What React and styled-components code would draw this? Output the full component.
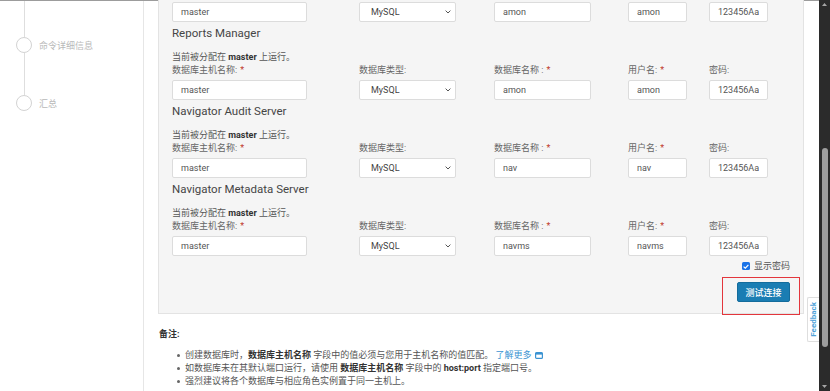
import React from 'react';
import styled, { createGlobalStyle } from 'styled-components';

const FONT = `Roboto, "Noto Sans CJK SC", "Liberation Sans", sans-serif`;

const GlobalStyle = createGlobalStyle`
  html, body { margin: 0; padding: 0; background: #fff; }
  body { font-family: ${FONT}; width: 830px; height: 391px; overflow: hidden; }
  * { box-sizing: border-box; }
`;

const Page = styled.div`
  position: relative;
  display: flex;
  width: 830px;
  height: 391px;
  overflow: hidden;
  background: #fff;
`;

const Main = styled.div`
  flex: 1;
  min-width: 0;
  display: flex;
  border-top: 1px solid #9c9c9c;
`;

const Sidebar = styled.aside`
  width: 144px;
  flex: none;
  border-right: 1px solid #e6e6e6;
  overflow: hidden;
  padding-top: 15px;
`;

const Step = styled.div`
  position: relative;
  height: 58px;
  display: flex;
  align-items: center;
  gap: 7px;
  padding-left: 16px;
  font-size: 9px;
  color: #b9b9b9;
  &::before {
    content: "";
    position: absolute;
    left: 23.5px;
    top: -21px;
    width: 1px;
    height: 42px;
    background: #dedede;
  }
`;

const Dot = styled.span`
  position: relative;
  width: 16px;
  height: 16px;
  flex: none;
  border-radius: 50%;
  border: 1.5px solid #d3d3d3;
  background: #fff;
`;

const Content = styled.main`
  flex: 1;
  min-width: 0;
  padding: 0 15px 0 14px;
`;

const Panel = styled.section`
  margin-top: -9px;
  background: #f5f5f5;
  border: 1px solid #e3e3e3;
  padding: 9px 13px 11px;
`;

const Heading = styled.h3`
  margin: 4px 0 11px;
  font-size: 11.5px;
  line-height: 14px;
  font-weight: 400;
  color: #454545;
`;

const Assigned = styled.div`
  font-size: 9px;
  line-height: 13px;
  color: #555;
  b { color: #333; font-weight: 700; }
`;

const FieldRow = styled.div`
  display: grid;
  grid-template-columns: 187px 135px 134px 81px auto;
`;

const Field = styled.div`
  display: flex;
  flex-direction: column;
  width: ${(p) => p.$w}px;
`;

const Label = styled.label`
  font-size: 9px;
  line-height: 13px;
  color: #666;
  margin-bottom: 3px;
  white-space: nowrap;
`;

const Req = styled.span`
  color: #c0392b;
  margin-left: 3px;
`;

const TextInput = styled.input`
  width: 100%;
  height: 20px;
  border: 1px solid #dcdcdc;
  border-radius: 2px;
  background: #fff;
  padding: 0 8px;
  font: 9px ${FONT};
  color: #555;
  outline: none;
`;

const SelectBox = styled.div`
  height: 20px;
  display: flex;
  align-items: center;
  justify-content: space-between;
  padding: 0 4px 0 11px;
  border: 1px solid #dcdcdc;
  border-radius: 2px;
  background: #fff;
  font-size: 9px;
  color: #444;
`;

const Options = styled.div`
  display: flex;
  flex-direction: column;
  align-items: flex-end;
  margin-top: 4px;
`;

const CheckRow = styled.label`
  display: flex;
  align-items: center;
  gap: 4px;
  font-size: 9px;
  line-height: 12px;
  color: #555;
`;

const CheckBox = styled.span`
  width: 8px;
  height: 8px;
  border-radius: 1.5px;
  background: #1a73e8;
  display: inline-flex;
  align-items: center;
  justify-content: center;
`;

const TestButton = styled.button`
  margin-top: 10px;
  width: 53px;
  height: 20px;
  padding: 0;
  background: #1a7db3;
  border: 1px solid #146c9c;
  border-radius: 2px;
  color: #fff;
  font: 500 9px ${FONT};
`;

const Notes = styled.div`
  padding: 14px 0 0 1px;
`;

const NotesTitle = styled.div`
  font-size: 9px;
  line-height: 13px;
  font-weight: 700;
  color: #333;
`;

const NoteList = styled.ul`
  list-style: none;
  margin: 8px 0 0;
  padding: 0;
`;

const NoteItem = styled.li`
  padding-left: 18px;
  font-size: 9px;
  line-height: 13px;
  color: #555;
  white-space: nowrap;
  b { color: #333; font-weight: 700; }
  &::before {
    content: "";
    display: inline-block;
    width: 3px;
    height: 3px;
    border-radius: 50%;
    background: #666;
    vertical-align: middle;
    margin-right: 5px;
  }
`;

const Link = styled.a`
  color: #3a93d2;
  text-decoration: none;
  svg { vertical-align: -1px; margin-left: 3px; }
`;

const Scrollbar = styled.div`
  width: 11px;
  flex: none;
  background: #2b2b2b;
  display: flex;
  flex-direction: column;
  align-items: center;
  padding: 3px 0;
`;

const Track = styled.div`
  flex: 1;
  width: 100%;
  display: flex;
  justify-content: center;
`;

const Thumb = styled.div`
  width: 6px;
  border-radius: 3px;
  background: #9e9e9e;
`;

const Feedback = styled.div`
  position: absolute;
  right: 11px;
  top: 297px;
  width: 12px;
  height: 45px;
  background: #fff;
  border: 1px solid #dedede;
  border-right: none;
  border-radius: 2px 0 0 2px;
  display: flex;
  align-items: center;
  justify-content: center;
  span {
    writing-mode: vertical-rl;
    transform: rotate(180deg);
    font: 700 8px ${FONT};
    color: #4ea2d8;
  }
`;

const Highlight = styled.div`
  position: absolute;
  left: 722px;
  top: 277px;
  width: 78px;
  height: 38px;
  border: 1.5px solid #e3363c;
`;

const Chevron = () => (
  <svg width="6" height="4" viewBox="0 0 6 4">
    <path d="M0.6 0.6 L3 3 L5.4 0.6" stroke="#555" strokeWidth="1" fill="none" />
  </svg>
);

const Arrow = ({ up }) => (
  <svg width="5" height="3" viewBox="0 0 5 3">
    <path d={up ? 'M0 3 L2.5 0 L5 3 Z' : 'M0 0 L2.5 3 L5 0 Z'} fill="#a5a5a5" />
  </svg>
);

const sections = [
  { title: 'Activity Monitor', db: 'amon', user: 'amon', scrolled: true },
  { title: 'Reports Manager', db: 'amon', user: 'amon' },
  { title: 'Navigator Audit Server', db: 'nav', user: 'nav' },
  { title: 'Navigator Metadata Server', db: 'navms', user: 'navms' },
];

const DbSection = ({ s }) => {
  const showTop = !s.scrolled;
  return (
    <div>
      {showTop && <Heading>{s.title}</Heading>}
      {showTop && (
        <Assigned>
          当前被分配在 <b>master</b> 上运行。
        </Assigned>
      )}
      <FieldRow>
        <Field $w={135}>
          {showTop && <Label>数据库主机名称:<Req>*</Req></Label>}
          <TextInput defaultValue="master" />
        </Field>
        <Field $w={97}>
          {showTop && <Label>数据库类型:</Label>}
          <SelectBox>
            <span>MySQL</span>
            <Chevron />
          </SelectBox>
        </Field>
        <Field $w={97}>
          {showTop && <Label>数据库名称 :<Req>*</Req></Label>}
          <TextInput defaultValue={s.db} />
        </Field>
        <Field $w={59}>
          {showTop && <Label>用户名:<Req>*</Req></Label>}
          <TextInput defaultValue={s.user} />
        </Field>
        <Field $w={59}>
          {showTop && <Label>密码:</Label>}
          <TextInput defaultValue="123456Aa" />
        </Field>
      </FieldRow>
    </div>
  );
};

export default function App() {
  return (
    <>
      <GlobalStyle />
      <Page>
        <Main>
          <Sidebar>
            <Step><Dot />命令详细信息</Step>
            <Step><Dot />汇总</Step>
          </Sidebar>
          <Content>
            <Panel>
              {sections.map((s) => (
                <DbSection key={s.title} s={s} />
              ))}
              <Options>
                <CheckRow>
                  <CheckBox>
                    <svg width="6" height="5" viewBox="0 0 6 5">
                      <path d="M0.6 2.6 L2.3 4.2 L5.4 0.8" stroke="#fff" strokeWidth="1.2" fill="none" />
                    </svg>
                  </CheckBox>
                  显示密码
                </CheckRow>
                <TestButton>测试连接</TestButton>
              </Options>
            </Panel>
            <Notes>
              <NotesTitle>备注:</NotesTitle>
              <NoteList>
                <NoteItem>
                  创建数据库时，<b>数据库主机名称</b> 字段中的值必须与您用于主机名称的值匹配。{' '}
                  <Link href="#">
                    了解更多
                    <svg width="8" height="7" viewBox="0 0 8 7">
                      <rect x="0.6" y="0.6" width="6.8" height="5.8" rx="1" stroke="currentColor" strokeWidth="1.2" fill="none" />
                      <rect x="0.6" y="0.6" width="6.8" height="2" fill="currentColor" />
                    </svg>
                  </Link>
                </NoteItem>
                <NoteItem>
                  如数据库未在其默认端口运行，请使用 <b>数据库主机名称</b> 字段中的 <b>host:port</b> 指定端口号。
                </NoteItem>
                <NoteItem>强烈建议将各个数据库与相应角色实例置于同一主机上。</NoteItem>
              </NoteList>
            </Notes>
          </Content>
        </Main>
        <Scrollbar>
          <Arrow up />
          <Track>
            <Thumb style={{ marginTop: 142, height: 199 }} />
          </Track>
          <Arrow />
        </Scrollbar>
        <Feedback><span>Feedback</span></Feedback>
        <Highlight />
      </Page>
    </>
  );
}
